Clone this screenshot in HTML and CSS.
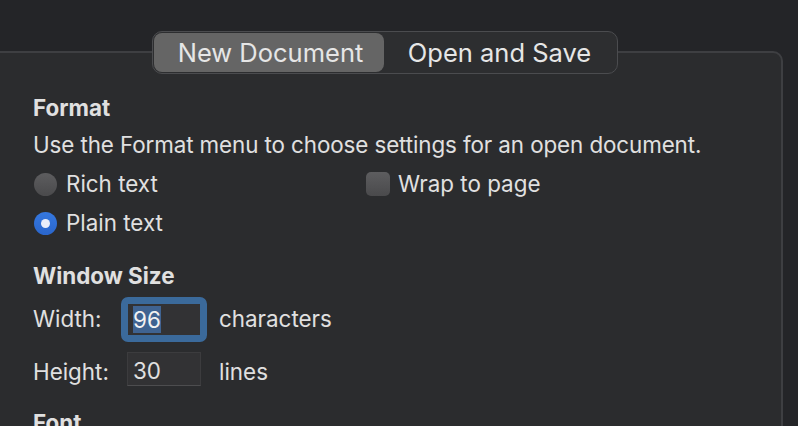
FILE: index.html
```html
<!DOCTYPE html>
<html>
<head>
<meta charset="utf-8">
<link rel="stylesheet" href="styles.css">
</head>
<body>
<div class="panel">
  <div class="tabs-row">
    <div class="segmented">
      <div class="seg seg-on">New Document</div>
      <div class="seg">Open and Save</div>
    </div>
  </div>
  <div class="content">
    <div class="heading h-format">Format</div>
    <div class="desc">Use the Format menu to choose settings for an open document.</div>
    <div class="opt-grid">
      <div class="row"><span class="radio"></span><span>Rich text</span></div>
      <div class="row row-check"><span class="check"></span><span>Wrap to page</span></div>
      <div class="row"><span class="radio radio-on"></span><span>Plain text</span></div>
    </div>
    <div class="heading h-size">Window Size</div>
    <div class="size-grid">
      <div class="lbl">Width:</div>
      <div class="ring"><div class="field"><span class="sel">96</span></div></div>
      <div class="unit">characters</div>
      <div class="lbl low">Height:</div>
      <div class="plain"><div class="field"><span class="low-val">30</span></div></div>
      <div class="unit low">lines</div>
    </div>
    <div class="heading h-font">Font</div>
  </div>
</div>
</body>
</html>
```

FILE: styles.css
```css
html, body {
  margin: 0;
  padding: 0;
  background: #242528;
  height: 426px;
  overflow: hidden;
}
body {
  font-family: Inter, "Liberation Sans", sans-serif;
  font-size: 22.4px;
  line-height: 28px;
  color: #e0e0e0;
  padding-top: 51px;
  white-space: nowrap;
}
.panel {
  width: 793px;
  margin-left: -10px;
  height: 420px;
  box-sizing: border-box;
  border: 2px solid #3e3f42;
  border-radius: 10px;
  background: #2b2c2e;
}
.tabs-row {
  display: flex;
  justify-content: center;
  margin-top: -22px;
  padding-right: 4px;
}
.segmented {
  display: flex;
  height: 43px;
  box-sizing: border-box;
  width: 466px;
  padding: 1px;
  border: 1px solid #4b4c4f;
  border-radius: 10px;
  background: #2d2e30;
}
.seg {
  flex: 0 0 auto;
  display: flex;
  align-items: center;
  justify-content: center;
  font-size: 25.5px;
  color: #e6e6e6;
}
.seg-on {
  width: 230px;
  height: 39px;
  background: #656565;
  border-radius: 8px;
  padding-left: 4px;
  box-sizing: border-box;
}
.seg:not(.seg-on) {
  flex: 1;
}
.content {
  padding-left: 41px;
  padding-top: 20px;
}
.heading {
  font-weight: 700;
}
.desc {
  margin-top: 9px;
  letter-spacing: -0.1px;
}
.opt-grid {
  margin-top: 11px;
  display: grid;
  grid-template-columns: 333px auto;
  row-gap: 11px;
}
.row {
  display: flex;
  align-items: center;
  gap: 9px;
  height: 28px;
}
.row-check {
  gap: 8px;
}
.radio {
  width: 23px;
  height: 23px;
  border-radius: 50%;
  background: linear-gradient(#5d5d5f, #4a4a4c);
  flex: 0 0 auto;
  margin-left: 1px;
  display: flex;
  align-items: center;
  justify-content: center;
}
.radio-on {
  background: linear-gradient(#3578e0, #2a66cc);
}
.radio-on::after {
  content: "";
  width: 9px;
  height: 9px;
  border-radius: 50%;
  background: #e9eefa;
}
.check {
  width: 24px;
  height: 24px;
  border-radius: 5px;
  background: linear-gradient(#5d5d5f, #4a4a4c);
  flex: 0 0 auto;
}
.h-size {
  margin-top: 25px;
}
.size-grid {
  margin-top: 6px;
  display: grid;
  grid-template-columns: 88px 98px auto;
  grid-template-rows: 46px 36px;
  row-gap: 9px;
  align-items: center;
}
.low {
  padding-top: 6px;
}
.low-val {
  padding-top: 3px;
}
.ring {
  width: 86px;
  height: 45px;
  box-sizing: border-box;
  border: 7px solid #3b6a9b;
  border-radius: 7px;
  background: #333335;
}
.ring .field {
  width: 100%;
  height: 100%;
  border: none;
  padding-left: 5px;
}
.plain {
  padding-left: 6px;
}
.field {
  box-sizing: border-box;
  width: 74px;
  height: 34px;
  background: #323234;
  border: 1px solid #3c3c3e;
  border-bottom-color: #4d4d4f;
  padding-left: 5px;
  display: flex;
  align-items: center;
}
.sel {
  background: #3f6391;
  color: #f2f2f2;
  line-height: 27px;
}
.h-font {
  margin-top: 22px;
}
```
